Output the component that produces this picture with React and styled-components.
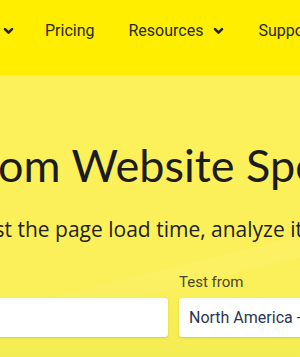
import React from 'react';
import styled, { createGlobalStyle } from 'styled-components';

const GlobalStyle = createGlobalStyle`
  html, body {
    margin: 0;
    padding: 0;
    overflow: hidden;
    background: #fcf15a;
  }
  body {
    font-family: Roboto, 'Liberation Sans', sans-serif;
  }
`;

const Page = styled.div`
  width: 300px;
  height: 357px;
  overflow: hidden;
  background: #fcf15a;
`;

const TopBar = styled.header`
  height: 75px;
  background: #ffee00;
  display: flex;
  align-items: flex-start;
  padding-top: 20px;
  box-sizing: border-box;
`;

const NavList = styled.nav`
  display: flex;
  align-items: center;
  gap: 34px;
  white-space: nowrap;
  padding-left: 3px;
`;

const NavItem = styled.a`
  display: flex;
  align-items: center;
  gap: 10px;
  font-family: Roboto, 'Liberation Sans', sans-serif;
  font-size: 16px;
  color: #2a2a1a;
  text-decoration: none;
  line-height: 22px;

  &:first-child { margin-right: -3px; }
`;

const Chevron = () => (
  <svg width="11" height="8" viewBox="0 0 11 8">
    <path d="M2 2.2l3.5 3.5 3.5-3.5" fill="none" stroke="#222" strokeWidth="2.6" strokeLinecap="round" strokeLinejoin="round" />
  </svg>
);

const Hero = styled.section`
  height: 282px;
  padding-top: 63px;
  box-sizing: border-box;
  background:
    linear-gradient(166deg, transparent 66%, rgba(255, 255, 255, 0.05) 66%, rgba(255, 255, 255, 0.05) 72%, transparent 72%),
    linear-gradient(180deg, #fcf15a 0%, #fbf05a 70%, #f4ec53 100%);
`;

const Title = styled.h1`
  margin: 0 0 0 -113px;
  white-space: nowrap;
  font-family: Lato, 'Open Sans', sans-serif;
  font-weight: 400;
  font-size: 45px;
  line-height: 54px;
  color: #1c1c1c;
`;

const Lead = styled.p`
  margin: 24px 0 0 -170px;
  white-space: nowrap;
  font-family: 'Open Sans', 'DejaVu Sans', sans-serif;
  font-size: 21px;
  line-height: 26px;
  color: #1e1e1e;
`;

const FormRow = styled.div`
  display: flex;
  gap: 11px;
  margin: 31px 0 0 -200px;
`;

const Field = styled.label`
  display: flex;
  flex-direction: column;
  gap: 7px;
  width: ${p => p.width}px;
  flex: none;
`;

const FieldLabel = styled.span`
  font-family: Roboto, 'Liberation Sans', sans-serif;
  font-size: 15px;
  line-height: 18px;
  color: #4a4636;
`;

const Box = styled.div`
  height: 39px;
  background: #fff;
  border-radius: 3px;
  box-shadow: 0 1px 2px rgba(120, 110, 0, 0.25);
  display: flex;
  align-items: center;
  padding: 0 10px;
  font-family: Roboto, 'Liberation Sans', sans-serif;
  font-size: 16px;
  color: #2c3650;
  white-space: nowrap;
  overflow: hidden;
`;

export default function App() {
  return (
    <Page>
      <GlobalStyle />
      <TopBar>
        <NavList>
          <NavItem><Chevron /></NavItem>
          <NavItem>Pricing</NavItem>
          <NavItem>Resources <Chevron /></NavItem>
          <NavItem>Support</NavItem>
        </NavList>
      </TopBar>
      <Hero>
        <Title>Pingdom Website Speed Test</Title>
        <Lead>Enter a URL to test the page load time, analyze it and find bottlenecks.</Lead>
        <FormRow>
          <Field width={368}>
            <FieldLabel>URL</FieldLabel>
            <Box />
          </Field>
          <Field width={300}>
            <FieldLabel>Test from</FieldLabel>
            <Box>North America - USA - Washington D.C</Box>
          </Field>
        </FormRow>
      </Hero>
    </Page>
  );
}
